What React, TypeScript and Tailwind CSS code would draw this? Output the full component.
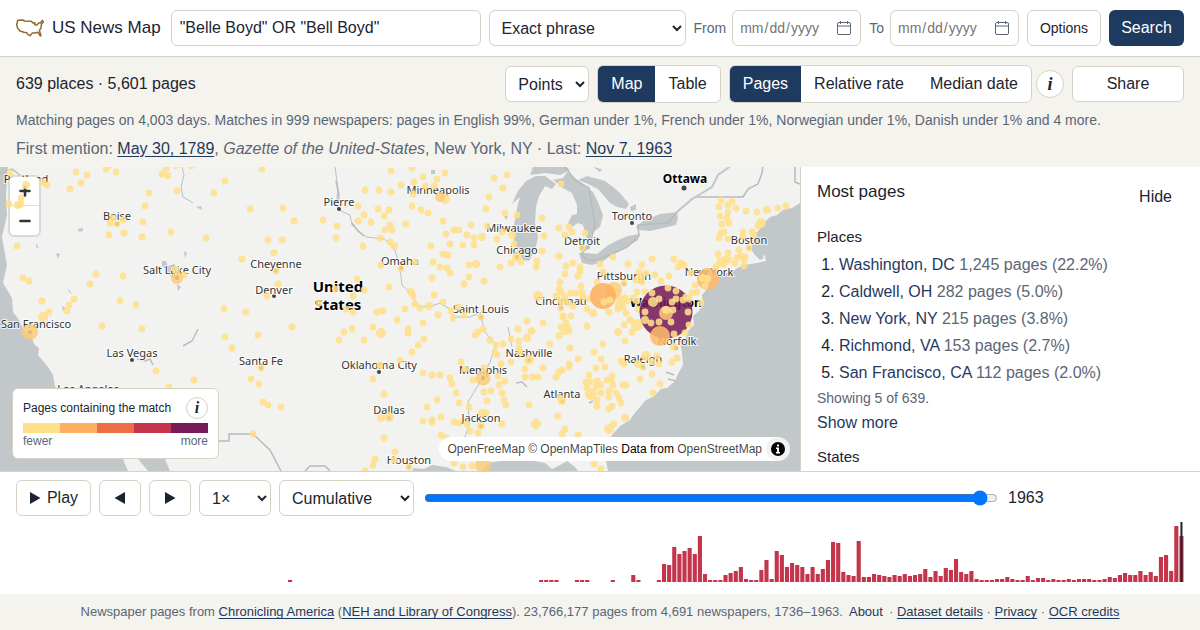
import { useState } from 'react';
import type { ReactNode } from 'react';

type Dot = [x: number, y: number, r?: number];

const CONTROL = 'h-9 rounded-md border border-[#d6d2c6] bg-white text-[#1c2430]';
const LINK = 'text-[#1f3a5f] underline underline-offset-2';

const PLACES = [
  { name: 'Washington, DC', pages: '1,245', share: '22.2%' },
  { name: 'Caldwell, OH', pages: '282', share: '5.0%' },
  { name: 'New York, NY', pages: '215', share: '3.8%' },
  { name: 'Richmond, VA', pages: '153', share: '2.7%' },
  { name: 'San Francisco, CA', pages: '112', share: '2.0%' },
];

const FIRST_YEAR = 1736;
const LAST_YEAR = 1963;

// Years with a handful of matches before the dense run starts
const EARLY: Record<number, number> = {
  1789: 2, 1838: 2, 1839: 2, 1840: 2, 1841: 2, 1845: 2, 1846: 2, 1847: 2,
  1852: 2, 1856: 7, 1857: 2, 1861: 2,
};

// One bar per year from 1862
const DENSE = [
  18, 17, 35, 28, 31, 34, 28, 46, 8, 2,
  2, 2, 7, 9, 11, 15, 3, 2, 2, 12,
  22, 3, 31, 27, 15, 19, 17, 15, 8, 15,
  8, 13, 22, 40, 39, 10, 7, 6, 41, 5,
  5, 8, 7, 6, 5, 7, 6, 8, 6, 7,
  8, 13, 5, 11, 6, 14, 12, 23, 10, 8,
  11, 3, 2, 2, 2, 3, 3, 5, 3, 2,
  2, 6, 2, 4, 4, 2, 3, 2, 2, 3,
  2, 3, 3, 3, 2, 2, 3, 5, 4, 7,
  9, 7, 7, 11, 7, 10, 6, 25, 27, 11,
  56, 46,
];

const SCALE = ['bg-[#fee08b]', 'bg-[#fdae61]', 'bg-[#ec6e45]', 'bg-[#c4344b]', 'bg-[#751b58]'];

const CITIES: { name: string; x: number; y: number; dot?: [number, number] }[] = [
  { name: 'Portland', x: 26, y: 16 },
  { name: 'Boise', x: 117, y: 53, dot: [117, 57] },
  { name: 'Salt Lake City', x: 177, y: 107, dot: [177, 111] },
  { name: 'Pierre', x: 339, y: 39, dot: [339, 42] },
  { name: 'Minneapolis', x: 438, y: 27 },
  { name: 'Cheyenne', x: 276, y: 101, dot: [276, 104] },
  { name: 'Denver', x: 274, y: 127, dot: [274, 129] },
  { name: 'Omaha', x: 400, y: 98, dot: [401, 101] },
  { name: 'Milwaukee', x: 514, y: 65 },
  { name: 'Chicago', x: 517, y: 87, dot: [517, 90] },
  { name: 'Saint Louis', x: 481, y: 146, dot: [481, 150] },
  { name: 'Toronto', x: 632, y: 53, dot: [632, 56] },
  { name: 'Detroit', x: 582, y: 78, dot: [582, 81] },
  { name: 'Pittsburgh', x: 624, y: 113, dot: [624, 117] },
  { name: 'Cincinnati', x: 561, y: 138, dot: [561, 141] },
  { name: 'New York', x: 709, y: 109 },
  { name: 'Boston', x: 749, y: 77, dot: [749, 81] },
  { name: 'Norfolk', x: 677, y: 178, dot: [676, 181] },
  { name: 'Raleigh', x: 643, y: 196, dot: [643, 200] },
  { name: 'Nashville', x: 529, y: 190, dot: [529, 193] },
  { name: 'Memphis', x: 483, y: 207, dot: [483, 211] },
  { name: 'Jackson', x: 481, y: 255, dot: [481, 259] },
  { name: 'Atlanta', x: 562, y: 231, dot: [562, 234] },
  { name: 'Houston', x: 409, y: 297, dot: [409, 300] },
  { name: 'Dallas', x: 389, y: 247, dot: [389, 251] },
  { name: 'Oklahoma City', x: 379, y: 202, dot: [379, 205] },
  { name: 'Santa Fe', x: 261, y: 198, dot: [261, 201] },
  { name: 'Las Vegas', x: 132, y: 190, dot: [132, 193] },
  { name: 'Los Angeles', x: 88, y: 226 },
  { name: 'San Francisco', x: 36, y: 161, dot: [30, 165] },
];

const DOTS: Dot[] = [
  // Pacific and mountain west
  [10, 6], [26, 18, 4], [21, 31], [18, 38, 4], [21, 37], [9, 37], [42, 15], [47, 18], [76, 5], [87, 8],
  [81, 16], [70, 22], [106, 2], [109, -1], [116, 5], [166, 2], [162, 7], [168, 9], [176, -1], [191, -1],
  [262, 2], [225, 14], [214, 26], [149, 26], [177, 24], [145, 39], [250, 42], [110, 56], [113, 51], [123, 53],
  [117, 57], [143, 55], [109, 68], [124, 66], [142, 70], [171, 65], [206, 71], [268, 73], [17, 79], [242, 92],
  [23, 111], [29, 114], [96, 107], [90, 117], [123, 109], [176, 103, 4], [184, 108], [42, 134], [49, 145],
  [43, 150, 5], [74, 132], [69, 138], [67, 144], [120, 134], [136, 138], [224, 142], [246, 145], [267, 129],
  [102, 159], [142, 162], [156, 204], [194, 213], [169, 220], [225, 170], [232, 181], [258, 168], [261, 201],
  [251, 212], [259, 217], [263, 235], [268, 238], [281, 240], [253, 267],
  // Plains and upper midwest
  [391, 4], [412, 1], [445, 6], [437, 12], [423, 10], [414, 15], [401, 18], [425, 19], [434, 19], [413, 27],
  [365, 23], [379, 23], [391, 25], [445, 32, 5], [507, 8], [494, 11], [503, 21], [489, 30], [358, 39],
  [378, 42], [389, 43], [364, 48], [384, 49], [412, 39], [421, 43], [428, 46], [486, 42], [505, 46], [517, 48],
  [283, 41], [294, 54], [323, 53], [337, 59], [358, 54], [371, 55], [390, 58], [406, 57], [443, 54], [385, 63],
  [392, 63], [380, 71], [336, 71], [363, 79], [390, 75], [394, 79, 4], [282, 73], [274, 86], [276, 104],
  [278, 117], [431, 79], [446, 67], [454, 63], [459, 63], [471, 58], [467, 68], [474, 71], [482, 70, 4],
  [474, 78], [450, 77], [463, 78], [487, 59], [502, 65], [497, 72], [512, 68, 4], [514, 77], [517, 90, 5],
  [521, 95], [511, 96], [500, 100], [443, 87], [448, 88], [433, 95], [415, 95], [381, 98], [401, 102],
  [440, 100], [447, 101], [450, 106], [469, 98], [476, 97, 4], [469, 110], [464, 117], [484, 114], [432, 111],
  [357, 112], [335, 122], [364, 123], [353, 129], [389, 120], [411, 125, 4], [413, 129], [415, 137], [434, 128],
  [443, 135], [429, 139, 4], [420, 141], [405, 142], [377, 145], [383, 144], [346, 142], [353, 145], [319, 136],
  [397, 153], [458, 140], [451, 144], [464, 148], [438, 148], [453, 151], [481, 150], [527, 154],
  // South central
  [292, 160], [339, 173], [344, 165], [352, 162], [373, 160], [381, 166, 5], [364, 173], [423, 156], [408, 162],
  [408, 166], [424, 172], [418, 178], [412, 185], [400, 193], [380, 198], [373, 212], [423, 206], [432, 208],
  [440, 208], [450, 211], [452, 217], [456, 226], [459, 236], [469, 240], [437, 233], [427, 240], [384, 227],
  [381, 251, 4], [389, 250, 5], [423, 254], [432, 253], [432, 255], [441, 250], [454, 255], [459, 256],
  [467, 257], [470, 264], [478, 266], [441, 268], [446, 271], [384, 271], [395, 285], [375, 292], [373, 298],
  [394, 293], [409, 300], [365, 304], [454, 296], [463, 300], [472, 299], [481, 259, 4], [502, 257],
  [482, 246, 4], [486, 246], [487, 234], [484, 225], [491, 224], [502, 226], [504, 233], [506, 238], [529, 238],
  [499, 218], [505, 214], [484, 201], [473, 213], [465, 202], [461, 195], [498, 209], [501, 197], [511, 195],
  [497, 188], [495, 185], [496, 178], [490, 173], [483, 162], [478, 165], [475, 168], [503, 177], [511, 172],
  [519, 174], [527, 171, 4], [531, 164], [518, 162], [519, 181], [520, 185], [529, 193, 5], [525, 202],
  [525, 210], [532, 210],
  // Great Lakes and Ohio valley
  [561, 17], [542, 51], [544, 69], [559, 61], [569, 60], [565, 68], [572, 65], [585, 66], [582, 81], [542, 84],
  [559, 89], [537, 94], [536, 100], [573, 96], [566, 99], [565, 107], [580, 100], [580, 104], [578, 109],
  [560, 115], [581, 119], [559, 122], [538, 129, 5], [556, 129], [600, 97], [613, 90], [603, 105], [597, 115],
  [628, 97], [642, 98], [652, 92], [674, 92], [681, 96], [684, 98], [678, 100], [669, 109], [661, 114],
  [655, 108], [642, 115], [636, 113], [624, 116], [639, 105], [641, 109], [646, 106], [691, 106], [695, 118],
  [565, 130], [571, 126], [576, 126], [582, 126], [561, 125], [561, 134], [568, 136], [573, 139], [561, 141],
  [583, 130], [563, 149], [571, 149], [587, 142], [593, 146, 4], [590, 132], [609, 145], [618, 142], [618, 138],
  [626, 146], [623, 140], [619, 131], [622, 135], [628, 134], [633, 131], [638, 142], [625, 131], [630, 153],
  [637, 134], [637, 125], [645, 125],
  // New England
  [721, 33], [732, 34], [719, 40], [728, 38], [728, 45], [720, 49], [727, 51], [736, 41], [746, 44], [757, 45],
  [767, 43, 4], [778, 41], [786, 39], [722, 57], [729, 56], [761, 56, 5], [758, 59], [721, 66], [724, 65],
  [719, 71], [728, 72], [743, 65], [743, 69], [752, 65], [754, 68], [749, 81], [739, 83], [718, 87], [728, 86],
  [726, 92], [721, 95, 5], [729, 93], [735, 96], [737, 91], [741, 89], [745, 90], [744, 93], [744, 99],
  [716, 100], [724, 97],
  // Southeast
  [543, 156], [532, 164], [550, 177], [559, 169], [561, 160], [566, 156], [563, 150], [568, 161], [564, 165],
  [569, 164], [587, 159], [570, 181], [578, 192], [543, 201], [569, 197], [569, 200], [562, 203], [559, 205],
  [556, 210], [538, 210], [594, 185], [603, 177], [601, 192], [596, 201], [605, 200], [589, 208], [612, 209],
  [618, 165, 4], [625, 174], [624, 158], [630, 153], [637, 158, 6], [632, 165], [621, 194], [624, 197],
  [646, 189, 5], [638, 197, 4], [643, 200], [652, 195], [657, 189], [659, 197], [640, 212], [652, 207],
  [660, 217], [653, 226], [672, 195], [677, 191], [674, 180, 4], [586, 215], [590, 215], [587, 221],
  [591, 227, 6], [597, 214], [596, 220], [601, 218], [607, 213], [611, 213], [613, 218], [623, 218],
  [626, 218], [601, 226], [609, 224], [609, 230], [616, 226], [619, 231], [621, 236], [612, 239], [609, 242],
  [597, 233], [597, 239], [562, 234, 4], [560, 231], [558, 249], [536, 257, 5], [565, 262], [562, 267],
  [578, 268], [625, 251, 4], [614, 257], [609, 262, 5], [594, 297], [601, 302],
];

// Drawn over the Washington circle
const CAPITAL_DOTS: Dot[] = [
  [652, 126], [668, 121], [676, 124], [653, 135, 5], [659, 132], [645, 145], [688, 145], [673, 143],
  [676, 132], [672, 135], [683, 133], [686, 130], [692, 126], [697, 125], [701, 136], [689, 132], [666, 143, 4],
  [651, 156], [659, 155], [671, 155], [674, 167], [685, 166], [689, 158], [645, 153, 4],
];

function UsaOutline() {
  return (
    <svg viewBox="0 0 84 54" className="w-7 h-[18px] shrink-0" fill="none" stroke="#8f6a33" strokeWidth="4.5" strokeLinejoin="round" aria-hidden="true">
      <path d="M5 4 20 3 26 6 46 7 51 12 57 11 56 17 63 18 68 12 73 12 79 4 82 9 76 17 75 27 70 34 75 50 72 50 66 40 56 42 49 42 42 50 36 47 32 41 24 40 12 36 5 28 2 17Z" />
    </svg>
  );
}

function CalendarIcon() {
  return (
    <svg viewBox="0 0 16 16" className="w-4 h-4 shrink-0" fill="none" stroke="#5b6675" aria-hidden="true">
      <rect x="1.5" y="2.5" width="13" height="12" rx="1.5" />
      <path d="M1.5 6h13M4.5 1v3M11.5 1v3" />
    </svg>
  );
}

function DateField({ id, label }: { id: string; label: string }) {
  return (
    <div className="flex items-center gap-1.5 shrink-0">
      <label htmlFor={id} className="text-sm text-[#5b6675]">{label}</label>
      <div className={`${CONTROL} relative w-[129px] flex items-center`}>
        <input
          id={id}
          type="date"
          className="w-full h-full pl-1.5 text-sm text-[#757575] bg-transparent outline-none [&::-webkit-calendar-picker-indicator]:opacity-0"
        />
        <span className="absolute right-2 pointer-events-none"><CalendarIcon /></span>
      </div>
    </div>
  );
}

function InfoButton({ label, small }: { label: string; small?: boolean }) {
  return (
    <button
      type="button"
      aria-label={label}
      className={`${small ? 'w-[22px] h-[22px] text-base' : 'w-7 h-7 text-lg'} rounded-full border border-[#d6d2c6] bg-white flex items-center justify-center font-bold italic leading-none font-['Liberation_Serif',serif] text-[#1c2430]`}
    >
      i
    </button>
  );
}

function Segmented({ options, value, onChange }: { options: string[]; value: string; onChange: (v: string) => void }) {
  return (
    <div className="flex h-[38px] rounded-md border border-[#d6d2c6] bg-white overflow-hidden">
      {options.map(o => (
        <button
          key={o}
          type="button"
          aria-pressed={o === value}
          onClick={() => onChange(o)}
          className={`px-[13px] ${o === value ? 'bg-[#1f3a5f] text-white' : 'text-[#1c2430]'}`}
        >
          {o}
        </button>
      ))}
    </div>
  );
}

function Circles({ dots }: { dots: Dot[] }) {
  return (
    <g fill="#fedf8b" fillOpacity="0.88">
      {dots.map(([x, y, r = 3.4], i) => <circle key={i} cx={x} cy={y} r={r} />)}
    </g>
  );
}

function BaseMap() {
  return (
    <svg viewBox="0 0 800 304" preserveAspectRatio="xMidYMid slice" className="absolute inset-0 w-full h-full bg-[#f2f3f0]" role="img" aria-label="Map of the United States">
      <g fill="#c2c8ca">
        <path d="M-400 -2 8 -2 6 30 7 48 2 70 7 98 3 116 12 131 13 145 19 153 23 161 31 168 34 177 39 181 38 188 48 200 53 208 55 220 85 232 105 260 123 292 128 304-400 304Z" />
        <path d="M130 275 138 292 148 304 170 304 165 292 150 275Z" />
        {/* Atlantic */}
        <path d="M1200 30 800 36 792 41 783 43 777 48 770 50 764 56 760 62 755 67 753 74 751 82 755 88 760 93 764 91 762 88 765 89 766 94 757 96 743 98 732 104 716 110 710 114 707 122 702 128 703 136 699 144 693 149 694 158 688 164 686 171 680 174 682 186 683 198 678 207 675 214 667 221 661 222 653 230 646 233 640 240 634 247 630 253 620 259 612 268 608 276 605 288 608 304 1200 304Z" />
        {/* Gulf */}
        <path d="M412 304 414 301 424 302 432 298 446 300 456 304ZM482 304 487 296 500 294 528 293 545 296 552 302 560 298 567 294 575 300 578 304Z" />
        {/* Michigan */}
        <path d="M512 37 518 24 526 14 536 9 545 9 556 17 552 22 545 19 539 29 536 40 535 56 538 70 535 84 529 94 523 93 517 84 514 74 514 58 517 41 520 30Z" />
        {/* Huron and Georgian Bay */}
        <path d="M553 13 563 11 567 5 575 11 587 20 593 25 598 35 603 48 600 60 592 66 590 74 587 73 585 65 583 58 578 56 572 60 568 56 572 48 577 47 577 38 572 26 563 21Z" />
        <path d="M578 13 587 9 605 14 613 20 620 26 629 37 626 42 617 40 610 36 605 30 598 22 588 17Z" />
        <path d="M530 8 533 0 543 -3 563 -3 570 3 560 8 545 6Z" />
        {/* St. Clair, Erie, Ontario */}
        <path d="M585 79 590 77 590 82 585 83Z" />
        <path d="M579 86 587 86 597 87 607 79 618 73 628 69 639 67 638 73 627 80 612 88 602 95 592 98 582 96Z" />
        <path d="M636 60 643 54 660 47 677 45 678 51 676 58 663 61 650 64 638 63Z" />
        <path d="M630 40 636 37 636 43 631 44ZM593 0 602 2 600 5Z" />
        {/* Great Salt Lake and small lakes */}
        <path d="M162 94 166 94 168 99 174 97 180 104 177 111 171 110 167 103 162 99ZM177 117 181 120 178 124ZM78 62 83 61 83 64 79 65ZM36 76 39 82 36 80ZM56 86 60 87 58 92ZM68 121 72 127 69 125ZM62 139 66 141 63 144ZM184 84 187 86 185 91ZM196 40 201 39 202 43ZM431 3 435 3 435 7 431 7ZM504 49 508 49 506 53Z" />
      </g>
      <g fill="none" stroke="#b3c2c9" strokeWidth="1">
        <path d="M182 0 184 8 181 20 183 30 190 34 193 36M335 0 338 22 336 38 341 44 350 48 352 58 366 70 384 72 394 80 400 100 402 118 411 126 418 140 432 139 440 136 450 142 455 150 470 150 482 145M481 150 485 165 496 178 490 195 480 215 468 235 469 258 465 270M508 160 512 180" />
      </g>
      <g fill="none" stroke="#b9bdbd" strokeWidth="1.5">
        <path d="M336 14 339 28 337 40M352 56 358 64 364 69M137 192 145 194 150 192 153 198M183 179 192 174 198 162M516 216 522 215 527 220M589 236 593 234M666 205 674 208M668 212 676 214M0 6 12 2 20 8" />
      </g>
      <g fill="none" stroke="#b8babb" strokeWidth="1.5">
        <path d="M562 -4 575 13 589 21 595 57 590 78 582 86 585 92 593 94 612 87 627 80 639 69 638 58 668 56 677 45 695 30 743 30 748 22 758 17 762 6 763 -2M795 -2 795 15 800 17" />
        <path d="M219 274 229 274 229 267 253 267 270 283 281 304M305 304 310 299 325 299 330 304" />
      </g>
      <path d="M678 44 692 32 712 20 718 8 732 -2" fill="none" stroke="#c2c8ca" strokeWidth="2" />
      <g fill="#444">
        {CITIES.map(c => c.dot && <circle key={c.name} cx={c.dot[0]} cy={c.dot[1]} r="2" />)}
        <circle cx="684" cy="21" r="2.5" />
      </g>
      <g className="font-['Noto_Sans','Open_Sans',sans-serif]" textAnchor="middle" fill="#333" stroke="#fff" strokeWidth="2" strokeOpacity="0.8" paintOrder="stroke" fontSize="11">
        {CITIES.map(c => <text key={c.name} x={c.x} y={c.y}>{c.name}</text>)}
        <g fontWeight="700" fill="#000">
          <text x="685" y="16" fontSize="12">Ottawa</text>
          <text x="666" y="140" fontSize="12">Washington</text>
          <text x="338" y="125" fontSize="15">United</text>
          <text x="338" y="143" fontSize="15">States</text>
        </g>
      </g>
    </svg>
  );
}

function Points() {
  return (
    <svg viewBox="0 0 800 304" preserveAspectRatio="xMidYMid slice" className="absolute inset-0 w-full h-full pointer-events-none" aria-hidden="true">
      <Circles dots={DOTS} />
      <g fill="#fdcb78" fillOpacity="0.85">
        <circle cx="30" cy="165" r="8" />
        <circle cx="177" cy="111" r="6" />
        <circle cx="440" cy="30" r="5" />
        <circle cx="483" cy="211" r="7.5" />
        <circle cx="483" cy="298" r="8" />
        <circle cx="614" cy="123" r="8" />
      </g>
      <circle cx="603" cy="129" r="13" fill="#fdae61" fillOpacity="0.88" />
      <circle cx="708" cy="112" r="11" fill="#fdba6b" fillOpacity="0.88" />
      <circle cx="666" cy="145" r="26.5" fill="#751b58" fillOpacity="0.87" />
      <circle cx="660" cy="169" r="10" fill="#fdb96b" fillOpacity="0.88" />
      <circle cx="666" cy="146" r="7" fill="#fdc576" fillOpacity="0.88" />
      <Circles dots={CAPITAL_DOTS} />
      <Circles dots={[[610, 133], [604, 135], [703, 111, 4], [707, 112, 4], [705, 119]]} />
    </svg>
  );
}

function Legend() {
  return (
    <div className="absolute left-3 bottom-3 w-[207px] rounded-md border border-[#d6d2c6] bg-white px-2.5 py-2 text-xs leading-[17px] text-[#1c2430]">
      <div className="flex items-center justify-between">
        <span>Pages containing the match</span>
        <InfoButton label="About the colours" small />
      </div>
      <div className="flex h-2.5 mt-1">
        {SCALE.map(c => <div key={c} className={`flex-1 ${c}`} />)}
      </div>
      <div className="flex justify-between text-[#5b6675]">
        <span>fewer</span>
        <span>more</span>
      </div>
    </div>
  );
}

function MapPanel() {
  return (
    <section className="relative flex-1 min-w-0 overflow-hidden">
      <BaseMap />
      <div className="absolute left-2 top-2 flex flex-col rounded-md border-2 border-black/10 bg-white bg-clip-padding divide-y divide-[#ddd]">
        <button type="button" aria-label="Zoom in" className="w-[29px] h-[29px] flex items-center justify-center">
          <svg viewBox="0 0 12 12" className="w-3 h-3" stroke="#333" strokeWidth="2.6" strokeLinecap="round"><path d="M1.5 6h9M6 1.5v9" /></svg>
        </button>
        <button type="button" aria-label="Zoom out" className="w-[29px] h-[29px] flex items-center justify-center">
          <svg viewBox="0 0 12 12" className="w-3 h-3" stroke="#333" strokeWidth="2.6" strokeLinecap="round"><path d="M1.5 6h9" /></svg>
        </button>
      </div>
      <Points />
      <Legend />
      <div className="absolute right-2.5 bottom-2.5 h-6 flex items-center gap-2 rounded-full bg-white pl-2 text-xs text-black">
        <span>
          <a href="#openfreemap" className="text-black/75">OpenFreeMap</a>{' '}
          <a href="#openmaptiles" className="text-black/75">© OpenMapTiles</a>{' '}
          Data from <a href="#openstreetmap" className="text-black/75">OpenStreetMap</a>
        </span>
        <button type="button" aria-label="Toggle attribution" className="w-6 h-6 -ml-1 rounded-full bg-black/5 flex items-center justify-center">
          <svg viewBox="0 0 14 14" className="w-3.5 h-3.5" aria-hidden="true">
            <circle cx="7" cy="7" r="7" />
            <path d="M6 2.5h2v2H6zM5 5.5h3v4.5h1v1.5H5V10h1V7H5z" fill="#fff" />
          </svg>
        </button>
      </div>
    </section>
  );
}

function Ranking() {
  return (
    <aside className="w-[400px] shrink-0 border-l border-[#d6d2c6] px-4 overflow-hidden">
      <div className="flex justify-between pt-3">
        <h2 className="text-[17px] leading-[25px]">Most pages</h2>
        <button type="button" className="h-9 px-3">Hide</button>
      </div>
      <h3 className="mt-2.5 text-[15px] leading-6">Places</h3>
      <ol className="mt-0.5 list-decimal pl-[22px]">
        {PLACES.map(p => (
          <li key={p.name} className="leading-[27px] text-[#5b6675] marker:text-[#1c2430]">
            <a href="#place" className="text-[#1f3a5f]">{p.name}</a> {p.pages} pages ({p.share})
          </li>
        ))}
      </ol>
      <p className="text-sm leading-[25px] text-[#5b6675]">Showing 5 of 639.</p>
      <button type="button" className="block leading-6 text-[#1f3a5f]">Show more</button>
      <h3 className="mt-2.5 text-[15px] leading-6">States</h3>
    </aside>
  );
}

function Histogram({ year }: { year: number }) {
  const step = 1168 / (LAST_YEAR - FIRST_YEAR + 1);
  const years = Array.from({ length: LAST_YEAR - FIRST_YEAR + 1 }, (_, i) => FIRST_YEAR + i);
  return (
    <svg viewBox="0 0 1168 60" preserveAspectRatio="none" className="block w-full h-[60px] mt-1.5" role="img" aria-label="Matching pages by year">
      <g fill="#c4344b">
        {years.map((y, i) => {
          const h = y >= 1862 ? DENSE[y - 1862] : EARLY[y] ?? 0;
          return h > 0 && <rect key={y} x={i * step + 0.5} y={60 - h} width={step - 1} height={h} />;
        })}
      </g>
      <rect x={(year - FIRST_YEAR + 0.5) * step - 1} y="0" width="2" height="60" fill="#1c2430" />
    </svg>
  );
}

function Triangle({ back }: { back?: boolean }) {
  return (
    <svg viewBox="0 0 12 12" className="w-3 h-3" fill="#1c2430" aria-hidden="true">
      <path d={back ? 'M11 0v12L0.5 6z' : 'M1 0v12L11.5 6z'} />
    </svg>
  );
}

function IconButton({ label, children }: { label: string; children: ReactNode }) {
  return (
    <button type="button" aria-label={label} className={`${CONTROL} w-[42px] flex items-center justify-center`}>
      {children}
    </button>
  );
}

export default function App() {
  const [view, setView] = useState('Map');
  const [metric, setMetric] = useState('Pages');
  const [year, setYear] = useState(LAST_YEAR);

  return (
    <div className="h-screen flex flex-col bg-white text-base text-[#1c2430] font-['Liberation_Sans',Arial,sans-serif]">
      <header className="flex items-center gap-2 px-4 py-2.5 border-b border-[#d6d2c6]">
        <a href="#home" className="flex items-center gap-2 mr-0.5 text-[17px] whitespace-nowrap">
          <UsaOutline />
          US News Map
        </a>
        <input
          type="search"
          aria-label="Search newspapers"
          defaultValue={'"Belle Boyd" OR "Bell Boyd"'}
          className={`${CONTROL} flex-1 min-w-0 px-2 outline-none`}
        />
        <select aria-label="Match type" className={`${CONTROL} w-[197px] px-2`}>
          <option>Exact phrase</option>
          <option>All words</option>
        </select>
        <DateField id="from" label="From" />
        <DateField id="to" label="To" />
        <button type="button" className={`${CONTROL} w-[74px] text-sm`}>Options</button>
        <button type="submit" className="h-9 w-[75px] rounded-md bg-[#1f3a5f] text-white">Search</button>
      </header>

      <div className="bg-[#f5f3ee] px-4 pt-2 pb-1.5">
        <div className="flex items-center gap-2">
          <p className="flex-1">639 places · 5,601 pages</p>
          <select aria-label="Layer" className={`${CONTROL} w-[84px] px-2`}>
            <option>Points</option>
            <option>States</option>
          </select>
          <Segmented options={['Map', 'Table']} value={view} onChange={setView} />
          <div className="flex items-center gap-1">
            <Segmented options={['Pages', 'Relative rate', 'Median date']} value={metric} onChange={setMetric} />
            <InfoButton label="About these measures" />
          </div>
          <button type="button" className={`${CONTROL} w-28`}>Share</button>
        </div>
        <p className="mt-1.5 text-sm leading-[22px] text-[#5b6675]">
          Matching pages on 4,003 days. Matches in 999 newspapers: pages in English 99%, German under 1%, French under 1%, Norwegian under 1%, Danish under 1% and 4 more.
        </p>
        <p className="mt-1.5 leading-6 text-[#5b6675]">
          First mention: <a href="#first" className={LINK}>May 30, 1789</a>, <em>Gazette of the United-States</em>, New York, NY · Last:{' '}
          <a href="#last" className={LINK}>Nov 7, 1963</a>
        </p>
      </div>

      <main className="flex-1 min-h-0 flex border-b border-[#d6d2c6]">
        <MapPanel />
        <Ranking />
      </main>

      <section className="px-4 pt-2 pb-3">
        <div className="flex items-center gap-2">
          <button type="button" className={`${CONTROL} w-[75px] flex items-center justify-center gap-1.5`}>
            <Triangle />
            Play
          </button>
          <IconButton label="Previous year"><Triangle back /></IconButton>
          <IconButton label="Next year"><Triangle /></IconButton>
          <select aria-label="Speed" className={`${CONTROL} w-[72px] px-2`}>
            <option>1×</option>
            <option>2×</option>
          </select>
          <select aria-label="Mode" className={`${CONTROL} w-[135px] px-2`}>
            <option>Cumulative</option>
            <option>Single year</option>
          </select>
          <input
            id="year"
            type="range"
            aria-label="Year"
            min={FIRST_YEAR}
            max={1967}
            value={year}
            onChange={e => setYear(Math.min(LAST_YEAR, Number(e.target.value)))}
            className="flex-1 min-w-0 mx-0.5"
          />
          <output htmlFor="year" className="w-[176px]">{year}</output>
        </div>
        <Histogram year={year} />
      </section>

      <footer className="h-9 flex items-center justify-center bg-[#f5f3ee] text-[13px] text-[#5b6675]">
        <p>
          Newspaper pages from <a href="#ca" className={LINK}>Chronicling America</a> (<a href="#neh" className={LINK}>NEH and Library of Congress</a>). 23,766,177 pages from 4,691 newspapers, 1736–1963.
          <button type="button" className="mx-1.5 text-[#1f3a5f]">About</button>
          · <a href="#dataset" className={LINK}>Dataset details</a> · <a href="#privacy" className={LINK}>Privacy</a> · <a href="#ocr" className={LINK}>OCR credits</a>
        </p>
      </footer>
    </div>
  );
}
